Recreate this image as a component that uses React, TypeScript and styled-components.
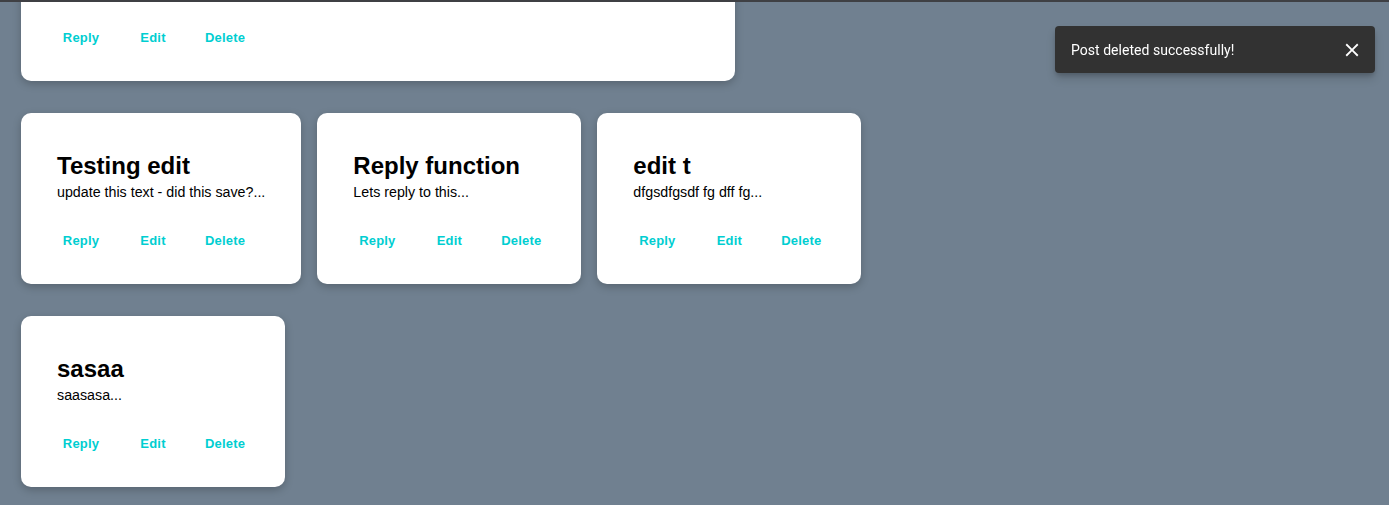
import styled, { createGlobalStyle } from "styled-components";
import { MdClose } from "react-icons/md";

const GlobalStyle = createGlobalStyle`
  html, body {
    margin: 0;
    padding: 0;
    background: #708090;
    font-family: "Liberation Sans", Arial, sans-serif;
    overflow: hidden;
  }
`;

const TopEdge = styled.div`
  position: fixed;
  top: 0;
  left: 0;
  right: 0;
  height: 2px;
  background: #3f4044;
  z-index: 5;
`;

const Feed = styled.main`
  display: flex;
  flex-wrap: wrap;
  align-items: flex-start;
  gap: 32px 16px;
  max-width: 900px;
  margin-top: -90px;
  padding: 0 0 40px 21px;
`;

interface CardProps {
  $width?: number;
}

const Card = styled.article<CardProps>`
  box-sizing: content-box;
  min-width: 192px;
  width: ${({ $width }) => ($width ? `${$width}px` : "auto")};
  padding: 38px 36px 27px;
  background: #fff;
  border-radius: 10px;
  box-shadow: 0 3px 8px rgba(0, 0, 0, 0.22);
`;

const Title = styled.h2`
  margin: 0;
  font-size: 24px;
  line-height: 30px;
  font-weight: 700;
  color: #000;
  white-space: nowrap;
`;

const Body = styled.p`
  margin: 1px 0 0;
  font-size: 14.25px;
  line-height: 20px;
  color: #000;
  white-space: nowrap;
`;

const Actions = styled.div`
  display: flex;
  gap: 8px;
  margin: 23px -8px 0;
`;

const ActionButton = styled.button`
  min-width: 64px;
  padding: 6px 8px;
  border: none;
  background: transparent;
  font-family: "Liberation Sans", Arial, sans-serif;
  font-size: 13px;
  font-weight: 700;
  line-height: 20px;
  letter-spacing: 0.2px;
  color: #00ced1;
  cursor: pointer;
`;

const Toast = styled.div`
  position: fixed;
  top: 26px;
  right: 14px;
  width: 320px;
  height: 47px;
  box-sizing: border-box;
  display: flex;
  align-items: center;
  justify-content: space-between;
  padding: 0 16px;
  background: #323232;
  border-radius: 4px;
  box-shadow: 0 3px 5px -1px rgba(0, 0, 0, 0.2), 0 6px 10px rgba(0, 0, 0, 0.14);
  color: #fff;
  font-family: Roboto, "Liberation Sans", sans-serif;
  font-size: 14px;
  letter-spacing: 0.03px;
`;

const CloseButton = styled.button`
  display: flex;
  align-items: center;
  justify-content: center;
  padding: 0;
  margin-right: -4px;
  border: none;
  background: transparent;
  color: #fff;
  cursor: pointer;
`;

interface Post {
  title: string;
  body: string;
  width?: number;
}

const posts: Post[] = [
  {
    title: "First post",
    body: "This is the very first post of the board, written to check how longer texts...",
    width: 642,
  },
  { title: "Testing edit", body: "update this text - did this save?..." },
  { title: "Reply function", body: "Lets reply to this..." },
  { title: "edit t", body: "dfgsdfgsdf fg dff fg..." },
  { title: "sasaa", body: "saasasa..." },
];

const PostCard = ({ post }: { post: Post }) => (
  <Card $width={post.width}>
    <Title>{post.title}</Title>
    <Body>{post.body}</Body>
    <Actions>
      <ActionButton>Reply</ActionButton>
      <ActionButton>Edit</ActionButton>
      <ActionButton>Delete</ActionButton>
    </Actions>
  </Card>
);

const App = () => (
  <>
    <GlobalStyle />
    <TopEdge />
    <Feed>
      {posts.map((post) => (
        <PostCard key={post.title} post={post} />
      ))}
    </Feed>
    <Toast>
      <span>Post deleted successfully!</span>
      <CloseButton aria-label="close">
        <MdClose size={22} />
      </CloseButton>
    </Toast>
  </>
);

export default App;
